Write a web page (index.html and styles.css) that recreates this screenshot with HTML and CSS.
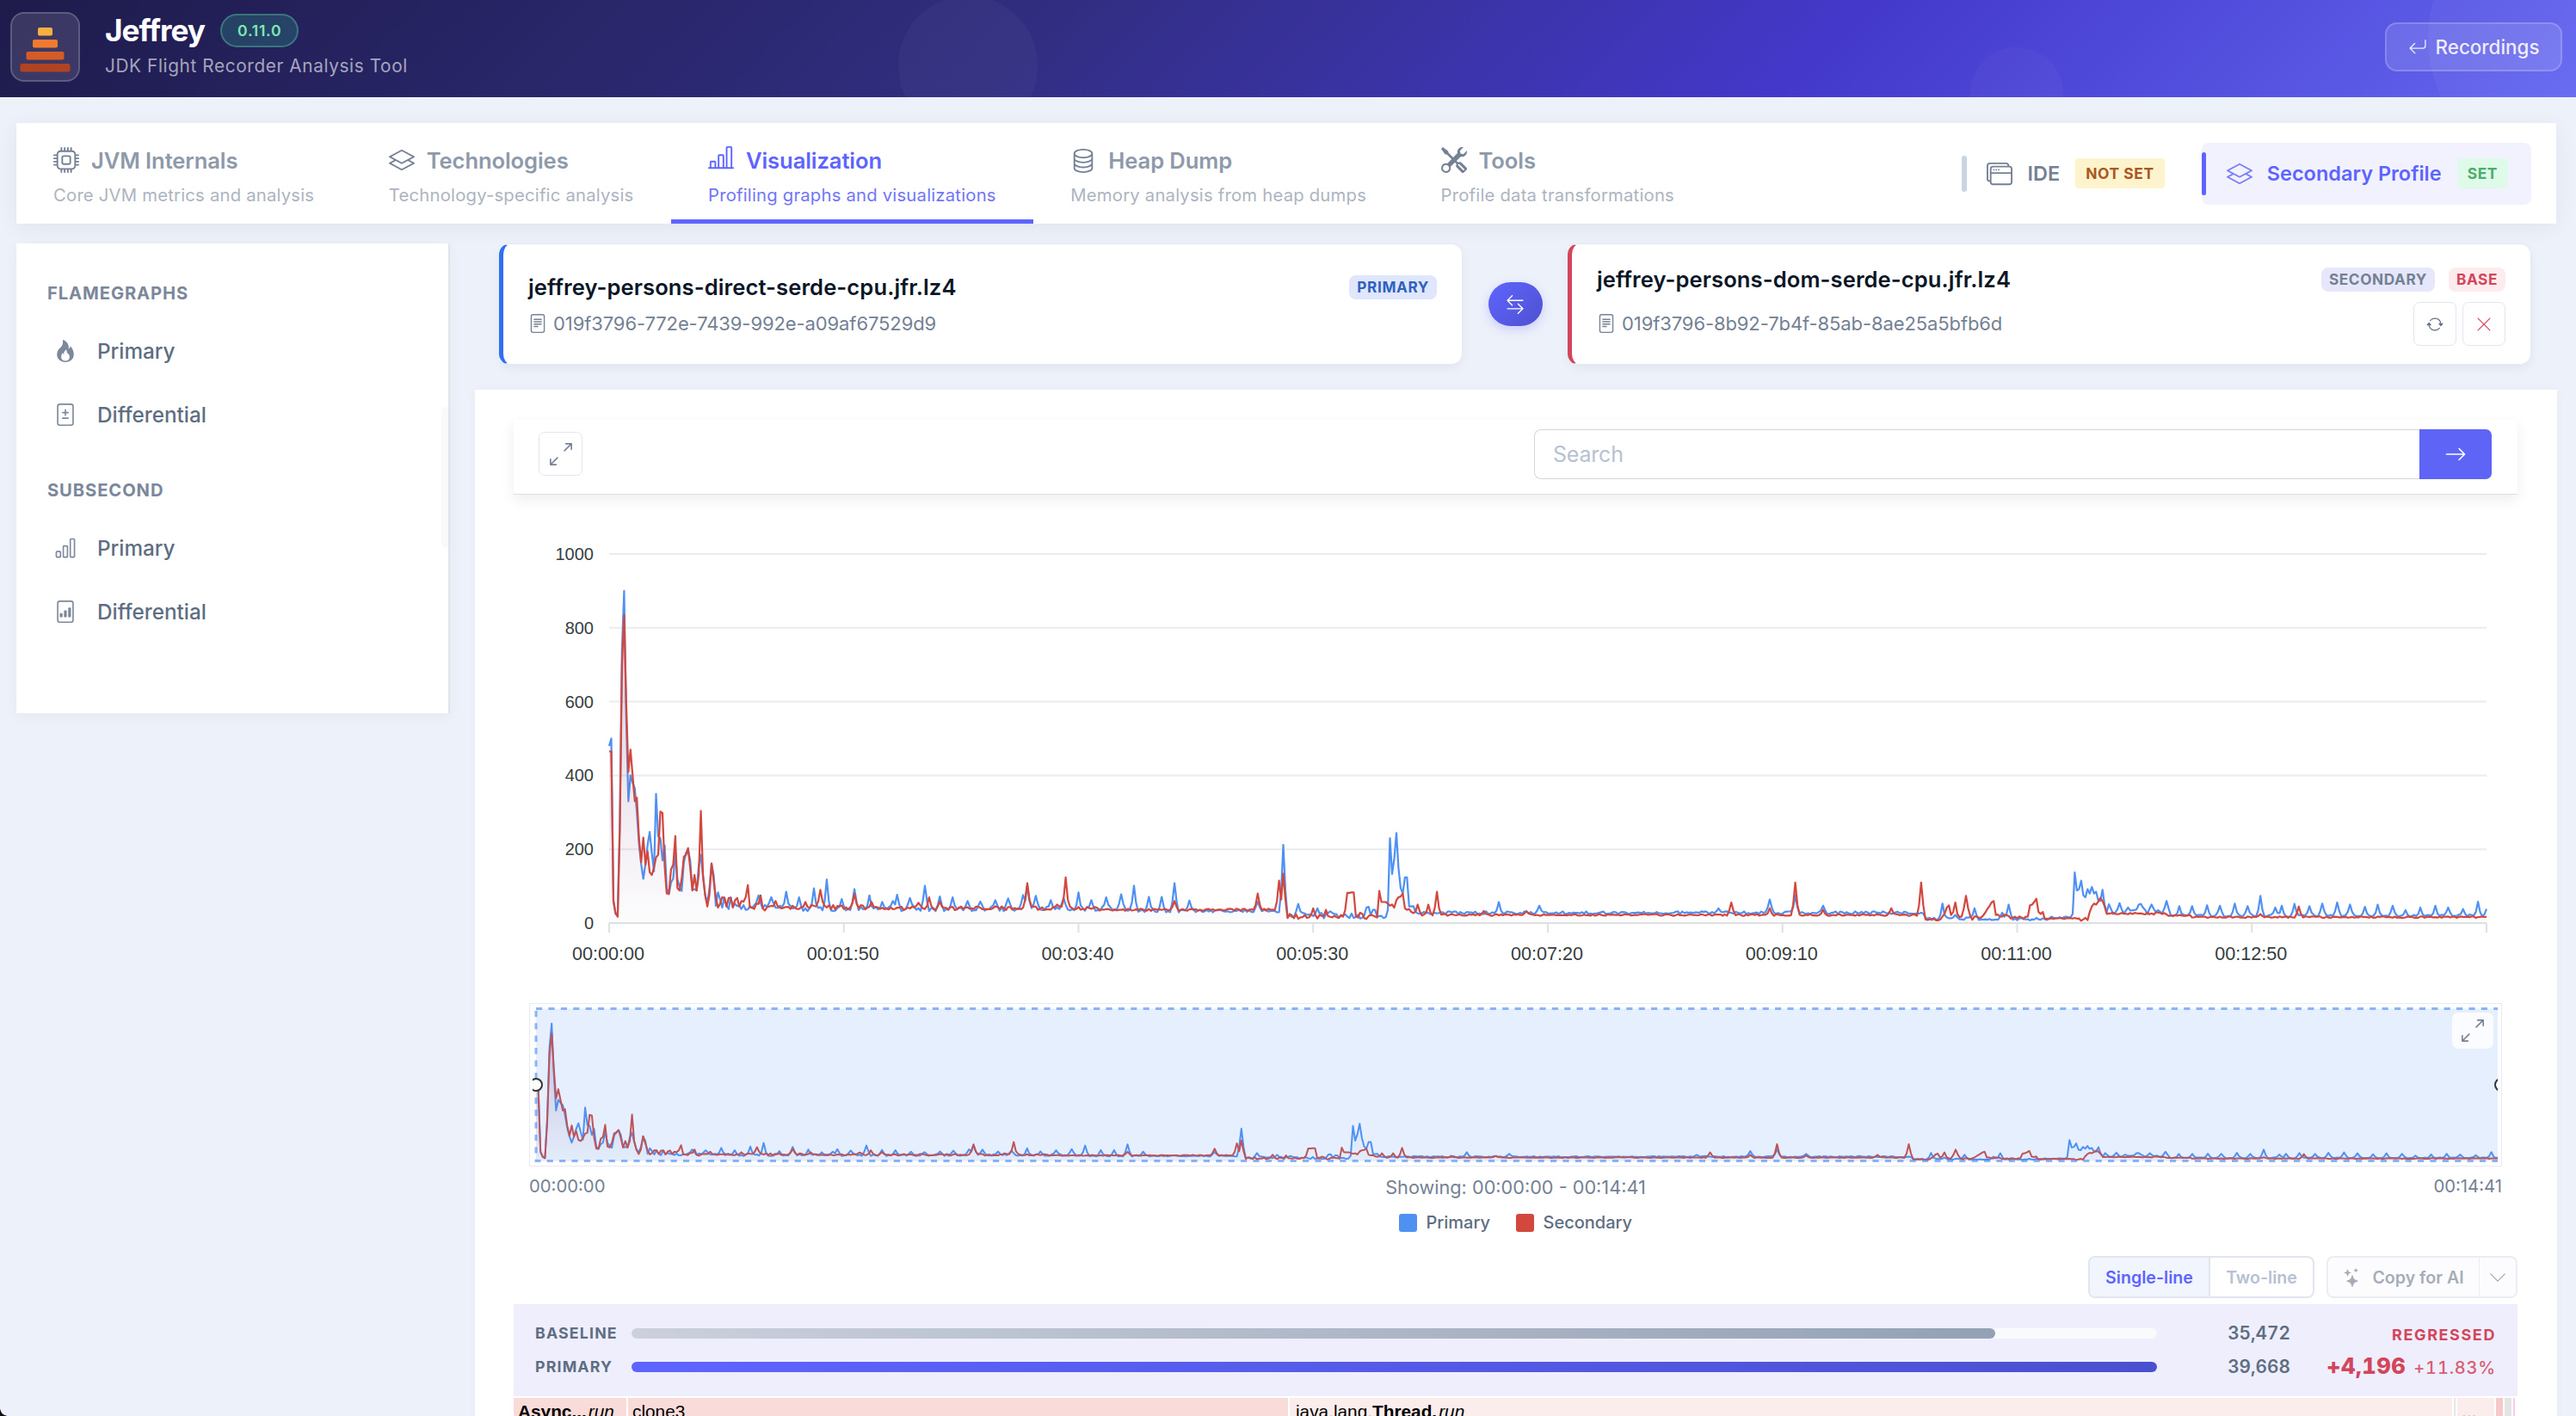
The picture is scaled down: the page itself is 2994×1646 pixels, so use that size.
FILE: index.html
```html
<!DOCTYPE html>
<html lang="en">
<head>
  <meta charset="UTF-8" />
  <title>Jeffrey - JDK Flight Recorder Analysis Tool</title>
  <link rel="stylesheet" href="styles.css">
</head>
<body>

<!-- icon sprite -->
<svg class="sprite" width="0" height="0">
  <symbol id="i-cpu" viewBox="0 0 16 16"><path d="M5 0a.5.5 0 0 1 .5.5V2h1V.5a.5.5 0 0 1 1 0V2h1V.5a.5.5 0 0 1 1 0V2h1V.5a.5.5 0 0 1 1 0V2A2.5 2.5 0 0 1 14 4.5h1.5a.5.5 0 0 1 0 1H14v1h1.5a.5.5 0 0 1 0 1H14v1h1.5a.5.5 0 0 1 0 1H14v1h1.5a.5.5 0 0 1 0 1H14a2.5 2.5 0 0 1-2.5 2.5v1.5a.5.5 0 0 1-1 0V14h-1v1.5a.5.5 0 0 1-1 0V14h-1v1.5a.5.5 0 0 1-1 0V14h-1v1.5a.5.5 0 0 1-1 0V14A2.5 2.5 0 0 1 2 11.5H.5a.5.5 0 0 1 0-1H2v-1H.5a.5.5 0 0 1 0-1H2v-1H.5a.5.5 0 0 1 0-1H2v-1H.5a.5.5 0 0 1 0-1H2A2.5 2.5 0 0 1 4.5 2V.5A.5.5 0 0 1 5 0m-.5 3A1.5 1.5 0 0 0 3 4.5v7A1.5 1.5 0 0 0 4.5 13h7a1.5 1.5 0 0 0 1.5-1.5v-7A1.5 1.5 0 0 0 11.5 3zM5 6.5A1.5 1.5 0 0 1 6.5 5h3A1.5 1.5 0 0 1 11 6.5v3A1.5 1.5 0 0 1 9.5 11h-3A1.5 1.5 0 0 1 5 9.5zM6.5 6a.5.5 0 0 0-.5.5v3a.5.5 0 0 0 .5.5h3a.5.5 0 0 0 .5-.5v-3a.5.5 0 0 0-.5-.5z"/></symbol>
  <symbol id="i-layers" viewBox="0 0 16 16"><path d="M8.235 1.559a.5.5 0 0 0-.47 0l-7.5 4a.5.5 0 0 0 0 .882L3.188 8 .264 9.559a.5.5 0 0 0 0 .882l7.5 4a.5.5 0 0 0 .47 0l7.5-4a.5.5 0 0 0 0-.882L12.813 8l2.922-1.559a.5.5 0 0 0 0-.882zm3.515 7.008L14.438 10 8 13.433 1.562 10 4.25 8.567l3.515 1.874a.5.5 0 0 0 .47 0zM8 9.433 1.562 6 8 2.567 14.438 6z"/></symbol>
  <symbol id="i-bars-line" viewBox="0 0 16 16"><path d="M11 2a1 1 0 0 1 1-1h2a1 1 0 0 1 1 1v12h.5a.5.5 0 0 1 0 1H.5a.5.5 0 0 1 0-1H1v-3a1 1 0 0 1 1-1h2a1 1 0 0 1 1 1v3h1V7a1 1 0 0 1 1-1h2a1 1 0 0 1 1 1v7h1zm1 12h2V2h-2zm-3 0V7H7v7zm-5 0v-3H2v3z"/></symbol>
  <symbol id="i-database" viewBox="0 0 16 16"><path d="M4.318 2.687C5.234 2.271 6.536 2 8 2s2.766.27 3.682.687C12.644 3.125 13 3.627 13 4c0 .374-.356.875-1.318 1.313C10.766 5.729 9.464 6 8 6s-2.766-.27-3.682-.687C3.356 4.875 3 4.373 3 4c0-.374.356-.875 1.318-1.313M13 5.698V7c0 .374-.356.875-1.318 1.313C10.766 8.729 9.464 9 8 9s-2.766-.27-3.682-.687C3.356 7.875 3 7.373 3 7V5.698c.271.202.58.378.904.525C4.978 6.711 6.427 7 8 7s3.022-.289 4.096-.777A5 5 0 0 0 13 5.698M14 4c0-1.007-.875-1.755-1.904-2.223C11.022 1.289 9.573 1 8 1s-3.022.289-4.096.777C2.875 2.245 2 2.993 2 4v9c0 1.007.875 1.755 1.904 2.223C4.978 15.71 6.427 16 8 16s3.022-.289 4.096-.777C13.125 14.755 14 14.007 14 13zm-1 4.698V10c0 .374-.356.875-1.318 1.313C10.766 11.729 9.464 12 8 12s-2.766-.27-3.682-.687C3.356 10.875 3 10.373 3 10V8.698c.271.202.58.378.904.525C4.978 9.71 6.427 10 8 10s3.022-.289 4.096-.777A5 5 0 0 0 13 8.698m0 3V13c0 .374-.356.875-1.318 1.313C10.766 14.729 9.464 15 8 15s-2.766-.27-3.682-.687C3.356 13.875 3 13.373 3 13v-1.302c.271.202.58.378.904.525C4.978 12.71 6.427 13 8 13s3.022-.289 4.096-.777c.324-.147.633-.323.904-.525"/></symbol>
  <symbol id="i-tools" viewBox="0 0 16 16"><path d="M1 0 0 1l2.2 3.081a1 1 0 0 0 .815.419h.07a1 1 0 0 1 .708.293l2.675 2.675-2.617 2.654A3.003 3.003 0 0 0 0 13a3 3 0 1 0 5.878-.851l2.654-2.617.968.968-.305.914a1 1 0 0 0 .242 1.023l3.27 3.27a.997.997 0 0 0 1.414 0l1.586-1.586a.997.997 0 0 0 0-1.414l-3.27-3.27a1 1 0 0 0-1.023-.242L10.5 9.5l-.96-.96 2.68-2.643A3.005 3.005 0 0 0 16 3q0-.405-.102-.777l-2.14 2.141L12 4l-.364-1.757L13.777.102a3 3 0 0 0-3.675 3.68L7.462 6.46 4.793 3.793a1 1 0 0 1-.293-.707v-.071a1 1 0 0 0-.419-.814zm9.646 10.646a.5.5 0 0 1 .708 0l2.914 2.915a.5.5 0 0 1-.707.707l-2.915-2.914a.5.5 0 0 1 0-.708M3 11l.471.242.529.026.287.445.445.287.026.529L5 13l-.242.471-.026.529-.445.287-.287.445-.529.026L3 15l-.471-.242L2 14.732l-.287-.445L1.268 14l-.026-.529L1 13l.242-.471.026-.529.445-.287.287-.445.529-.026z"/></symbol>
  <symbol id="i-windows" viewBox="0 0 16 16"><path d="M4.5 6a.5.5 0 1 0 0-1 .5.5 0 0 0 0 1M6 6a.5.5 0 1 0 0-1 .5.5 0 0 0 0 1m2-.5a.5.5 0 1 1-1 0 .5.5 0 0 1 1 0"/><path d="M12 1a2 2 0 0 1 2 2 2 2 0 0 1 2 2v8a2 2 0 0 1-2 2H4a2 2 0 0 1-2-2 2 2 0 0 1-2-2V3a2 2 0 0 1 2-2zM2 12V5a2 2 0 0 1 2-2h9a1 1 0 0 0-1-1H2a1 1 0 0 0-1 1v8a1 1 0 0 0 1 1m1-4v5a1 1 0 0 0 1 1h10a1 1 0 0 0 1-1V8zm12-1V5a1 1 0 0 0-1-1H4a1 1 0 0 0-1 1v2z"/></symbol>
  <symbol id="i-return" viewBox="0 0 16 16"><path d="M14.5 1.5a.5.5 0 0 1 .5.5v4.8a2.5 2.5 0 0 1-2.5 2.5H2.707l3.347 3.346a.5.5 0 0 1-.708.708l-4.2-4.2a.5.5 0 0 1 0-.708l4-4a.5.5 0 1 1 .708.708L2.707 8.3H12.5A1.5 1.5 0 0 0 14 6.8V2a.5.5 0 0 1 .5-.5"/></symbol>
  <symbol id="i-fire" viewBox="0 0 16 16"><path d="M8 16c3.314 0 6-2 6-5.5 0-1.5-.5-4-2.5-6 .25 1.5-1.25 2-1.25 2C11 4 9 .5 6 0c.357 2 .5 4-2 6-1.25 1-2 2.729-2 4.5C2 14 4.686 16 8 16m0-1c-1.657 0-3-1-3-2.75 0-.75.25-2 1.25-3C6.125 10 7 10.5 7 10.5c-.375-1.25.5-3.25 2-3.5-.179 1-.25 2 1 3 .625.5 1 1.364 1 2.25C11 14 9.657 15 8 15"/></symbol>
  <symbol id="i-diff" viewBox="0 0 16 16"><path d="M8 4a.5.5 0 0 1 .5.5V6H10a.5.5 0 0 1 0 1H8.5v1.5a.5.5 0 0 1-1 0V7H6a.5.5 0 0 1 0-1h1.5V4.5A.5.5 0 0 1 8 4m-2.5 6.5A.5.5 0 0 1 6 10h4a.5.5 0 0 1 0 1H6a.5.5 0 0 1-.5-.5"/><path d="M2 2a2 2 0 0 1 2-2h8a2 2 0 0 1 2 2v12a2 2 0 0 1-2 2H4a2 2 0 0 1-2-2zm10-1H4a1 1 0 0 0-1 1v12a1 1 0 0 0 1 1h8a1 1 0 0 0 1-1V2a1 1 0 0 0-1-1"/></symbol>
  <symbol id="i-bars" viewBox="0 0 16 16"><path d="M4 11H2v3h2zm5-4H7v7h2zm5-5v12h-2V2zm-2-1a1 1 0 0 0-1 1v12a1 1 0 0 0 1 1h2a1 1 0 0 0 1-1V2a1 1 0 0 0-1-1zM6 7a1 1 0 0 1 1-1h2a1 1 0 0 1 1 1v7a1 1 0 0 1-1 1H7a1 1 0 0 1-1-1zm-5 4a1 1 0 0 1 1-1h2a1 1 0 0 1 1 1v3a1 1 0 0 1-1 1H2a1 1 0 0 1-1-1z"/></symbol>
  <symbol id="i-file-bars" viewBox="0 0 16 16"><path d="M4.5 12a.5.5 0 0 1-.5-.5v-2a.5.5 0 0 1 .5-.5h1a.5.5 0 0 1 .5.5v2a.5.5 0 0 1-.5.5zm3 0a.5.5 0 0 1-.5-.5v-4a.5.5 0 0 1 .5-.5h1a.5.5 0 0 1 .5.5v4a.5.5 0 0 1-.5.5zm3 0a.5.5 0 0 1-.5-.5v-6a.5.5 0 0 1 .5-.5h1a.5.5 0 0 1 .5.5v6a.5.5 0 0 1-.5.5z"/><path d="M2 2a2 2 0 0 1 2-2h8a2 2 0 0 1 2 2v12a2 2 0 0 1-2 2H4a2 2 0 0 1-2-2zm10-1H4a1 1 0 0 0-1 1v12a1 1 0 0 0 1 1h8a1 1 0 0 0 1-1V2a1 1 0 0 0-1-1"/></symbol>
  <symbol id="i-file-text" viewBox="0 0 16 16"><path d="M5 4a.5.5 0 0 0 0 1h6a.5.5 0 0 0 0-1zm-.5 2.5A.5.5 0 0 1 5 6h6a.5.5 0 0 1 0 1H5a.5.5 0 0 1-.5-.5M5 8a.5.5 0 0 0 0 1h6a.5.5 0 0 0 0-1zm0 2a.5.5 0 0 0 0 1h3a.5.5 0 0 0 0-1z"/><path d="M2 2a2 2 0 0 1 2-2h8a2 2 0 0 1 2 2v12a2 2 0 0 1-2 2H4a2 2 0 0 1-2-2zm10-1H4a1 1 0 0 0-1 1v12a1 1 0 0 0 1 1h8a1 1 0 0 0 1-1V2a1 1 0 0 0-1-1"/></symbol>
  <symbol id="i-swap" viewBox="0 0 16 16"><path d="M1 11.5a.5.5 0 0 0 .5.5h11.793l-3.147 3.146a.5.5 0 0 0 .708.708l4-4a.5.5 0 0 0 0-.708l-4-4a.5.5 0 0 0-.708.708L13.293 11H1.5a.5.5 0 0 0-.5.5m14-7a.5.5 0 0 1-.5.5H2.707l3.147 3.146a.5.5 0 1 1-.708.708l-4-4a.5.5 0 0 1 0-.708l4-4a.5.5 0 1 1 .708.708L2.707 4H14.5a.5.5 0 0 1 .5.5"/></symbol>
  <symbol id="i-repeat" viewBox="0 0 16 16"><path d="M11.534 7h3.932a.25.25 0 0 1 .192.41l-1.966 2.36a.25.25 0 0 1-.384 0l-1.966-2.36a.25.25 0 0 1 .192-.41m-11 2h3.932a.25.25 0 0 0 .192-.41L2.692 6.23a.25.25 0 0 0-.384 0L.342 8.59A.25.25 0 0 0 .534 9"/><path d="M8 3c-1.552 0-2.94.707-3.857 1.818a.5.5 0 1 1-.771-.636A6.002 6.002 0 0 1 13.917 7H12.9A5 5 0 0 0 8 3M3.1 9a5.002 5.002 0 0 0 8.757 2.182.5.5 0 1 1 .771.636A6.002 6.002 0 0 1 2.083 9z"/></symbol>
  <symbol id="i-x" viewBox="0 0 16 16"><path d="M2.5 2.5l11 11M13.5 2.5l-11 11" fill="none" stroke="currentColor" stroke-linecap="round"/></symbol>
  <symbol id="i-right" viewBox="0 0 16 16"><path d="M1 8a.5.5 0 0 1 .5-.5h11.793l-3.147-3.146a.5.5 0 0 1 .708-.708l4 4a.5.5 0 0 1 0 .708l-4 4a.5.5 0 0 1-.708-.708L13.293 8.5H1.5A.5.5 0 0 1 1 8"/></symbol>
  <symbol id="i-expand" viewBox="0 0 16 16"><path d="M5.828 10.172a.5.5 0 0 0-.707 0l-4.096 4.096V11.5a.5.5 0 0 0-1 0v3.975a.5.5 0 0 0 .5.5H4.5a.5.5 0 0 0 0-1H1.732l4.096-4.096a.5.5 0 0 0 0-.707m4.344-4.344a.5.5 0 0 0 .707 0l4.096-4.096V4.5a.5.5 0 1 0 1 0V.525a.5.5 0 0 0-.5-.5H11.5a.5.5 0 0 0 0 1h2.768l-4.096 4.096a.5.5 0 0 0 0 .707"/></symbol>
  <symbol id="i-stars" viewBox="0 0 16 16"><path d="M7.657 6.247c.11-.33.576-.33.686 0l.645 1.937a2.89 2.89 0 0 0 1.829 1.828l1.936.645c.33.11.33.576 0 .686l-1.937.645a2.89 2.89 0 0 0-1.828 1.829l-.645 1.936a.361.361 0 0 1-.686 0l-.645-1.937a2.89 2.89 0 0 0-1.828-1.828l-1.937-.645a.361.361 0 0 1 0-.686l1.937-.645a2.89 2.89 0 0 0 1.828-1.828zM3.794 1.148a.217.217 0 0 1 .412 0l.387 1.162c.173.518.579.924 1.097 1.097l1.162.387a.217.217 0 0 1 0 .412l-1.162.387A1.73 1.73 0 0 0 4.593 5.69l-.387 1.162a.217.217 0 0 1-.412 0L3.407 5.69A1.73 1.73 0 0 0 2.31 4.593l-1.162-.387a.217.217 0 0 1 0-.412l1.162-.387A1.73 1.73 0 0 0 3.407 2.31zM10.863.099a.145.145 0 0 1 .274 0l.258.774c.115.346.386.617.732.732l.774.258a.145.145 0 0 1 0 .274l-.774.258a1.16 1.16 0 0 0-.732.732l-.258.774a.145.145 0 0 1-.274 0l-.258-.774a1.16 1.16 0 0 0-.732-.732L9.1 2.137a.145.145 0 0 1 0-.274l.774-.258c.346-.115.617-.386.732-.732z"/></symbol>
  <symbol id="i-down" viewBox="0 0 16 16"><path d="M2 5l6 6 6-6" fill="none" stroke="currentColor" stroke-linecap="round" stroke-linejoin="round"/></symbol>
</svg>

<header class="header">
  <span class="orb orb-1"></span>
  <span class="orb orb-2"></span>
  <span class="orb orb-3"></span>
  <div class="logo">
    <svg width="60" height="52" viewBox="0 0 60 52">
      <rect x="21" y="0" width="17" height="9.5" rx="2" fill="#f5b03d"/>
      <rect x="15" y="14" width="29" height="9.5" rx="2" fill="#f07a30"/>
      <rect x="7.5" y="28" width="44" height="9.5" rx="2" fill="#d65c26"/>
      <rect x="0.5" y="42" width="58" height="9.5" rx="2" fill="#b04422"/>
    </svg>
  </div>
  <div class="brand">
    <div class="brand-row"><span class="brand-name">Jeffrey</span><span class="version">0.11.0</span></div>
    <div class="brand-sub">JDK Flight Recorder Analysis Tool</div>
  </div>
  <button class="recordings"><svg width="22" height="22"><use href="#i-return"/></svg>Recordings</button>
</header>

<nav class="tabs">
  <div class="tab">
    <div class="tab-title"><svg width="30" height="30"><use href="#i-cpu"/></svg>JVM Internals</div>
    <div class="tab-sub">Core JVM metrics and analysis</div>
  </div>
  <div class="tab">
    <div class="tab-title"><svg width="30" height="30"><use href="#i-layers"/></svg>Technologies</div>
    <div class="tab-sub">Technology-specific analysis</div>
  </div>
  <div class="tab active">
    <div class="tab-title"><svg class="raised" width="30" height="30"><use href="#i-bars-line"/></svg>Visualization</div>
    <div class="tab-sub">Profiling graphs and visualizations</div>
  </div>
  <div class="tab">
    <div class="tab-title"><svg width="30" height="30"><use href="#i-database"/></svg>Heap Dump</div>
    <div class="tab-sub">Memory analysis from heap dumps</div>
  </div>
  <div class="tab">
    <div class="tab-title"><svg width="30" height="30"><use href="#i-tools"/></svg>Tools</div>
    <div class="tab-sub">Profile data transformations</div>
  </div>
  <div class="tab-actions">
    <div class="action ide"><svg width="30" height="30"><use href="#i-windows"/></svg>IDE<span class="state not-set">NOT SET</span></div>
    <div class="action secondary"><svg width="30" height="30"><use href="#i-layers"/></svg>Secondary Profile<span class="state set">SET</span></div>
  </div>
</nav>

<div class="page">
  <aside class="sidebar">
    <h4>FLAMEGRAPHS</h4>
    <a><svg width="26" height="26"><use href="#i-fire"/></svg>Primary</a>
    <a><svg width="26" height="26"><use href="#i-diff"/></svg>Differential</a>
    <h4 class="second">SUBSECOND</h4>
    <a><svg width="26" height="26"><use href="#i-bars"/></svg>Primary</a>
    <a><svg width="26" height="26"><use href="#i-file-bars"/></svg>Differential</a>
    <span class="scroll-thumb"></span>
  </aside>

  <main class="content">
    <div class="compare">
      <div class="profile primary">
        <div class="profile-info">
          <div class="profile-name">jeffrey-persons-direct-serde-cpu.jfr.lz4</div>
          <div class="profile-id"><svg width="22" height="22"><use href="#i-file-text"/></svg>019f3796-772e-7439-992e-a09af67529d9</div>
        </div>
        <div class="profile-side"><span class="tag tag-primary">PRIMARY</span></div>
      </div>
      <button class="swap"><svg width="22" height="22"><use href="#i-swap"/></svg></button>
      <div class="profile base">
        <div class="profile-info">
          <div class="profile-name">jeffrey-persons-dom-serde-cpu.jfr.lz4</div>
          <div class="profile-id"><svg width="22" height="22"><use href="#i-file-text"/></svg>019f3796-8b92-7b4f-85ab-8ae25a5bfb6d</div>
        </div>
        <div class="profile-side">
          <div class="tags"><span class="tag tag-secondary">SECONDARY</span><span class="tag tag-base">BASE</span></div>
          <div class="profile-buttons">
            <button><svg width="20" height="20"><use href="#i-repeat"/></svg></button>
            <button class="remove"><svg width="20" height="20"><use href="#i-x"/></svg></button>
          </div>
        </div>
      </div>
    </div>

    <section class="panel">
      <div class="toolbar">
        <button class="expand"><svg width="26" height="26"><use href="#i-expand"/></svg></button>
        <div class="search"><span class="search-input">Search</span><button><svg width="26" height="26"><use href="#i-right"/></svg></button></div>
      </div>

      <svg class="chart" id="chart" width="2329" height="575" viewBox="597 575 2329 575"></svg>

      <div class="brush">
        <svg id="brush" width="2291" height="188" viewBox="616 1167 2291 188"></svg>
        <button class="brush-expand"><svg width="26" height="26"><use href="#i-expand"/></svg></button>
      </div>
      <div class="range"><span>00:00:00</span><span class="showing">Showing: 00:00:00 - 00:14:41</span><span class="end">00:14:41</span></div>
      <div class="legend">
        <span><i class="dot blue"></i>Primary</span>
        <span><i class="dot red"></i>Secondary</span>
      </div>

      <div class="options">
        <div class="segmented"><span class="on">Single-line</span><span>Two-line</span></div>
        <div class="copy"><span><svg width="22" height="22"><use href="#i-stars"/></svg>Copy for AI</span><span class="caret"><svg width="22" height="22"><use href="#i-down"/></svg></span></div>
      </div>

      <div class="summary">
        <div class="bars">
          <span class="bar-label">BASELINE</span>
          <div class="track"><div class="fill fill-baseline" style="width: 89.4%"></div></div>
          <span class="bar-value">35,472</span>
          <span class="bar-label">PRIMARY</span>
          <div class="track"><div class="fill fill-primary" style="width: 100%"></div></div>
          <span class="bar-value">39,668</span>
        </div>
        <div class="verdict">
          <div class="verdict-title">REGRESSED</div>
          <div class="verdict-delta"><span>+4,196</span><small>+11.83%</small></div>
        </div>
      </div>

      <div class="flame">
        <div class="frame f1"><b>Async...</b><i>run</i></div>
        <div class="frame f2">clone3</div>
        <div class="frame f3">java.lang.<b>Thread.</b><i>run</i></div>
        <div class="frame f4"></div>
        <div class="frame f5">...</div>
        <div class="frame f6"></div>
        <div class="frame f7"></div>
        <div class="frame f8"></div>
      </div>
    </section>
  </main>
</div>

<script src="chart.js"></script>
</body>
</html>
```
FILE: styles.css
```css
* {
  box-sizing: border-box;
}

body {
  margin: 0;
  height: 1646px;
  overflow: hidden;
  position: relative;
  background: #edf1fa;
  font-family: Inter, "Liberation Sans", sans-serif;
  color: #5e6e82;
}

/* rounded window corner */
body::after {
  content: '';
  position: absolute;
  left: 0;
  bottom: 0;
  width: 9px;
  height: 9px;
  background: radial-gradient(circle at 100% 0, transparent 8.5px, #111 9px);
}

button {
  font: inherit;
  color: inherit;
  padding: 0;
  border: 0;
  display: flex;
  align-items: center;
  justify-content: center;
}

svg {
  fill: currentColor;
  flex: none;
}

.sprite {
  position: absolute;
}

/* header */
.header {
  position: relative;
  overflow: hidden;
  height: 113px;
  padding: 0 16px 4px 12px;
  display: flex;
  align-items: center;
  background: linear-gradient(135deg, #1e1b4b 0%, #312e81 40%, #4338ca 70%, #6366f1 100%);
  color: #fff;
}

.orb {
  position: absolute;
  border-radius: 50%;
  background: rgba(255, 255, 255, 0.03);
}

.orb-1 { left: 1044px; top: -5px; width: 162px; height: 162px; }
.orb-2 { left: 2290px; top: 55px; width: 108px; height: 108px; }
.orb-3 { left: 2822px; top: -115px; width: 320px; height: 320px; background: rgba(255, 255, 255, 0.04); }

.logo {
  width: 81px;
  height: 81px;
  border: 2px solid rgba(255, 255, 255, 0.18);
  border-radius: 16px;
  background: rgba(255, 255, 255, 0.12);
  display: flex;
  align-items: center;
  justify-content: center;
  padding-top: 6px;
}

.brand {
  margin-left: 29px;
}

.brand-row {
  display: flex;
  align-items: center;
  height: 42px;
}

.brand-name {
  font-size: 35.2px;
  font-weight: 700;
  letter-spacing: -1px;
  line-height: 44px;
}

.version {
  margin-left: 18px;
  height: 39px;
  padding: 0 18px;
  border: 2px solid rgba(110, 231, 183, 0.3);
  border-radius: 20px;
  background: rgba(52, 211, 153, 0.2);
  color: #7ee7b5;
  font-size: 17.6px;
  font-weight: 600;
  line-height: 36px;
  letter-spacing: 0.75px;
}

.brand-sub {
  height: 36px;
  margin-top: 3px;
  font-size: 20.8px;
  line-height: 36px;
  letter-spacing: 0.6px;
  color: rgba(255, 255, 255, 0.6);
}

.recordings {
  position: relative;
  margin-left: auto;
  width: 206px;
  height: 57px;
  gap: 10px;
  border: 2px solid rgba(255, 255, 255, 0.18);
  border-radius: 14px;
  background: rgba(255, 255, 255, 0.12);
  color: rgba(255, 255, 255, 0.88);
  font-size: 22.4px;
  font-weight: 500;
}

/* tabs */
.tabs {
  margin: 30px 23px 0 19px;
  height: 117px;
  display: flex;
  background: #fff;
  box-shadow: 0 4px 24px rgba(0, 0, 0, 0.06);
}

.tab {
  padding: 25px 43.5px 0 43px;
  color: #748194;
  white-space: nowrap;
}

.tab-title {
  display: flex;
  align-items: center;
  gap: 14px;
  height: 36px;
  font-size: 25.6px;
  font-weight: 600;
  letter-spacing: -0.1px;
  color: #8e99a9;
}

.tab-title svg {
  color: #748194;
}

.tab-title .raised {
  margin-bottom: 6px;
}

.tab-sub {
  margin-top: 10px;
  font-size: 20.3px;
  line-height: 25px;
  letter-spacing: 0.2px;
  color: #adb4bf;
}

.tab.active {
  border-bottom: 5px solid #5e64ff;
}

.tab.active .tab-title,
.tab.active .tab-title svg {
  color: #5e64ff;
}

.tab.active .tab-sub {
  color: #7176f8;
}

.tab-actions {
  margin-left: auto;
  padding-right: 29px;
  display: flex;
  align-items: center;
  gap: 19px;
}

.action {
  position: relative;
  height: 72px;
  display: flex;
  align-items: center;
  font-size: 23.5px;
  font-weight: 600;
  padding: 0 24px 0 29px;
  color: #748194;
}

.action::before {
  content: '';
  position: absolute;
  left: 0;
  top: 15px;
  width: 6px;
  height: 42px;
  border-radius: 3px;
  background: #cbd5e1;
}

.action svg {
  margin-right: 17px;
}

.action.secondary {
  padding: 0 27px 0 29px;
  border-radius: 8px;
  background: #f2f2fe;
  color: #5e64ff;
}

.action.secondary::before {
  top: 11px;
  width: 5px;
  height: 50px;
  background: #5e64ff;
}

.action.secondary svg {
  color: #7a80f5;
}

.state {
  margin-left: 18px;
  height: 35px;
  padding: 0 12px;
  border-radius: 4px;
  font-size: 17.4px;
  font-weight: 700;
  line-height: 35px;
  letter-spacing: 0.6px;
}

.not-set { background: #fdf3cd; color: #a85820; }
.set { background: #e0faea; color: #4bae6b; }

/* layout */
.page {
  display: flex;
  align-items: flex-start;
  gap: 29px;
  margin: 23px 23px 0 19px;
}

.sidebar {
  position: relative;
  width: 504px;
  height: 546px;
  flex: none;
  padding: 42px 36px;
  background: #fff;
  border-right: 2px solid #e1e5ea;
  box-shadow: 0 4px 16px rgba(0, 0, 0, 0.04);
}

.sidebar h4 {
  margin: 0 0 15px;
  font-size: 20.2px;
  line-height: 32px;
  font-weight: 700;
  letter-spacing: 0.9px;
  color: #7b879a;
}

.sidebar h4.second {
  margin-top: 35px;
}

.sidebar a {
  display: flex;
  align-items: center;
  gap: 24px;
  height: 74px;
  padding-left: 8px;
  font-size: 24.3px;
  font-weight: 500;
}

.sidebar h4 + a {
  margin-top: -1px;
}

.sidebar a svg {
  color: #7c889b;
}

.scroll-thumb {
  position: absolute;
  right: 0;
  top: 190px;
  width: 8px;
  height: 164px;
  border-radius: 6px 0 0 6px;
  background: #f9f9fa;
}

.content {
  flex: 1;
}

/* compared profiles */
.compare {
  display: flex;
  align-items: center;
  height: 141px;
  padding: 0 30px 0 28px;
}

.profile {
  flex: 1;
  height: 141px;
  display: flex;
  justify-content: space-between;
  padding: 0 29px 0 29px;
  border: 1px solid #e6eaf0;
  border-left: 5px solid #2f6ff0;
  border-radius: 13px;
  background: #fff;
  box-shadow: 0 4px 12px rgba(0, 0, 0, 0.05);
}

.profile.base {
  border-left-color: #d3455b;
}

.profile-info {
  padding-top: 33px;
}

.profile-name {
  font-size: 25.6px;
  line-height: 34px;
  font-weight: 600;
  letter-spacing: 0.08px;
  color: #0b1727;
}

.profile-id {
  margin-top: 8px;
  display: flex;
  align-items: center;
  gap: 7px;
  font-size: 22px;
  line-height: 34px;
  letter-spacing: -0.1px;
  color: #748194;
}

.base .profile-info { padding-top: 24px; }
.base .profile-id { margin-top: 17px; }

.profile-side {
  padding-top: 36px;
}

.base .profile-side {
  padding-top: 27px;
}

.tags {
  display: flex;
  gap: 16px;
}

.tag {
  display: block;
  height: 28px;
  padding: 0 9px;
  border-radius: 8px;
  font-size: 17.2px;
  font-weight: 700;
  line-height: 28px;
  letter-spacing: 0.6px;
}

.tag-primary { background: #e0e6fb; color: #2f62c0; }
.tag-secondary { background: #e6e7fb; color: #748194; }
.tag-base { background: #fdeced; color: #d3455b; }

.profile-buttons {
  display: flex;
  justify-content: flex-end;
  gap: 7px;
  margin-top: 12px;
}

.profile-buttons button {
  width: 50px;
  height: 51px;
  border: 1px solid #e3e6ed;
  border-radius: 7px;
  background: #fff;
}

.profile-buttons .remove {
  color: #d3455b;
}

.swap {
  width: 63px;
  height: 51px;
  margin: 0 29.5px;
  border-radius: 26px;
  background: linear-gradient(135deg, #5e64ff, #4f51cf);
  box-shadow: 0 4px 12px rgba(94, 100, 255, 0.25);
  color: #fff;
}

/* main panel */
.panel {
  height: 1240px;
  margin-top: 29px;
  padding: 35px 46px 0 45px;
  background: #fff;
  box-shadow: 0 0 12px rgba(0, 0, 0, 0.03);
}

.toolbar {
  display: flex;
  align-items: center;
  justify-content: space-between;
  height: 87px;
  padding: 0 30px 7px 29px;
  border-bottom: 1px solid #dcdfe3;
  box-shadow: 0 6px 16px rgba(0, 0, 0, 0.07);
}

.expand {
  width: 51px;
  height: 51px;
  border: 1px solid #e3e6ed;
  border-radius: 7px;
  background: #fff;
  color: #748194;
}

.search {
  display: flex;
  width: 1113px;
  height: 58px;
}

.search-input {
  flex: 1;
  padding-left: 21px;
  border: 1px solid #d3d7dd;
  border-right: 0;
  border-radius: 8px 0 0 8px;
  font-size: 25px;
  line-height: 56px;
  letter-spacing: -0.2px;
  color: #b6c1d2;
}

.search button {
  width: 84px;
  border-radius: 0 7px 7px 0;
  background: #5e64f5;
  color: #fff;
}

.chart {
  display: block;
}

.y-label {
  font: 20px "Liberation Sans", sans-serif;
  fill: #373d3f;
  text-anchor: end;
}

.x-label {
  font: 21.6px "Liberation Sans", sans-serif;
  fill: #373d3f;
  text-anchor: middle;
}

.brush {
  position: relative;
  width: 2293px;
  height: 190px;
  margin: 16px 0 0 18px;
  border: 1px solid #e7eaee;
}

.brush > svg {
  display: block;
}

.brush-expand {
  position: absolute;
  right: 9px;
  top: 10px;
  width: 48px;
  height: 42px;
  border-radius: 7px;
  background: rgba(255, 255, 255, 0.8);
  color: #748194;
}

.range {
  display: grid;
  grid-template-columns: 1fr auto 1fr;
  width: 2293px;
  height: 48px;
  margin-left: 18px;
  font-size: 20.3px;
  line-height: 46px;
  color: #748194;
}

.range .end {
  text-align: right;
}

.showing {
  font-size: 21.7px;
  padding-top: 1px;
}

.legend {
  display: flex;
  justify-content: center;
  gap: 30px;
  height: 34px;
  font-size: 20px;
  font-weight: 500;
}

.legend span {
  display: flex;
  align-items: center;
}

.dot {
  width: 21px;
  height: 21px;
  margin-right: 10.5px;
  border-radius: 3px;
}

.blue { background: #4e91f3; }
.red { background: #d2483f; }

.options {
  display: flex;
  justify-content: flex-end;
  gap: 14px;
  margin-top: 22px;
  height: 49px;
  font-size: 19.6px;
  font-weight: 600;
}

.segmented,
.copy {
  display: flex;
  border: 2px solid #e1e6ee;
  border-radius: 8px;
  overflow: hidden;
}

.segmented span,
.copy span {
  display: flex;
  align-items: center;
  justify-content: center;
}

.segmented span {
  width: 119px;
  color: #b6c1d2;
}

.segmented .on {
  width: 140px;
  border-right: 2px solid #e1e6ee;
  background: #f1f5fe;
  color: #5e64ff;
}

.copy {
  border-color: #ebedf2;
  background: #fcfcfe;
  color: #a6adb8;
}

.copy span {
  width: 175px;
  gap: 12px;
}

.copy .caret {
  width: 43px;
  border-left: 1px solid #ebedf2;
}

/* diff summary */
.summary {
  display: flex;
  align-items: center;
  height: 107px;
  margin-top: 7px;
  padding: 0 25px;
  background: #efeefd;
}

.bars {
  display: grid;
  grid-template-columns: 112px 1773px 155px;
  row-gap: 13px;
  align-items: center;
}

.bar-label {
  font-size: 17.8px;
  font-weight: 700;
  line-height: 26px;
  letter-spacing: 1.15px;
}

.bar-value {
  font-size: 20.8px;
  font-weight: 600;
  line-height: 26px;
  text-align: right;
  font-variant-numeric: tabular-nums;
}

.track {
  height: 12px;
  border-radius: 6px;
  background: #f9fafc;
}

.fill {
  height: 12px;
  border-radius: 6px;
}

.fill-baseline { background: linear-gradient(90deg, #cbd0dc, #94a1b5); }
.fill-primary { background: linear-gradient(90deg, #5e64ff, #4b50d0); }

.verdict {
  margin-left: auto;
  padding-top: 6px;
  text-align: right;
  color: #d3455b;
  white-space: nowrap;
}

.verdict-title {
  font-size: 18px;
  font-weight: 700;
  line-height: 32px;
  letter-spacing: 1.6px;
}

.verdict-delta {
  display: flex;
  justify-content: flex-end;
  align-items: baseline;
  gap: 9px;
  font-size: 25.6px;
  font-weight: 800;
  line-height: 40px;
  letter-spacing: 0.5px;
  font-variant-numeric: tabular-nums;
}

.verdict-delta small {
  font-size: 20px;
  font-weight: 500;
  opacity: 0.85;
  letter-spacing: 0.8px;
}

/* flamegraph row */
.flame {
  display: flex;
  gap: 2px;
  margin-top: 2px;
  height: 34px;
  font: 20.8px/32px "Liberation Sans", sans-serif;
  color: #000;
}

.frame {
  height: 34px;
  padding-left: 5px;
  white-space: nowrap;
  overflow: hidden;
  background: #f9dcd9;
}

.frame i {
  margin-left: 2px;
}

.f1 { width: 131px; }
.f2 { width: 767px; }
.f3 { width: 1351px; padding-left: 7px; background: #fbedec; }
.f4 { width: 2px; padding: 0; background: #e6e6e6; }
.f5 { width: 43px; background: #fbedec; }
.f6 { width: 8px; padding: 0; background: #f5c9c9; }
.f7 { width: 8px; padding: 0; background: #e4e4e4; }
.f8 { width: 2px; padding: 0; background: #f6cdea; }
```
FILE: chart.js
```js
const BLUE = '#4e91f3';
const RED = '#d2483f';
const LAST = 880;

// floor: [from second, level, jitter], runs: [first second, values...], spikes: [second, value]
const primary = {
  floor: [[0, 42, 7], [90, 38, 6], [245, 33, 4], [317, 20, 8], [362, 17, 4], [378, 28, 4], [617, 12, 4], [640, 11, 3], [660, 11, 4], [675, 15, 3], [701, 30, 6], [731, 20, 3]],
  runs: [
    [0, 480, 500, 60, 25, 20, 280, 740, 900, 560, 330, 400, 380, 365, 300, 215, 160, 120, 160, 210, 247, 190, 140, 350, 235, 230, 170, 210, 95, 78, 110, 120, 190, 120, 98, 87, 165, 190, 200, 170, 90, 92, 88, 155, 185, 125, 75, 55, 92, 160, 130, 47, 83, 65, 42, 70, 47, 38, 70, 44, 52],
    [354, 22, 42, 44, 22, 36, 36, 18],
    [364, 16, 35, 230, 133, 175, 244, 150, 95, 80, 124, 124, 45, 45, 46, 30],
    [685, 15, 25, 137, 88, 92, 115, 75, 70, 92, 80, 98, 80, 85, 62, 60, 90, 48, 30]
  ],
  spikes: [[70, 75], [76, 70], [83, 85], [89, 70], [96, 94], [102, 118], [109, 65], [115, 92], [122, 75], [128, 57], [133, 60], [135, 77], [141, 68], [148, 101], [155, 72], [161, 70], [168, 60], [174, 58], [181, 62], [187, 67], [194, 76], [196, 103], [200, 74], [207, 62], [213, 68], [220, 83], [226, 62], [233, 70], [240, 78], [246, 101], [253, 71], [259, 71], [265, 108], [272, 61], [304, 58], [316, 212], [323, 52], [332, 40], [338, 32], [417, 57], [436, 47], [520, 40], [544, 64], [556, 75], [569, 47], [625, 53], [631, 22], [640, 40], [653, 28], [656, 50], [703, 51], [708, 54], [712, 42], [717, 50], [718, 52], [723, 50], [730, 60], [736, 46], [742, 46], [749, 48], [755, 47], [762, 53], [768, 46], [774, 74], [781, 42], [784, 47], [790, 52], [797, 46], [803, 53], [810, 56], [816, 50], [823, 44], [829, 50], [836, 47], [842, 35], [849, 42], [856, 47], [862, 42], [869, 38], [876, 58], [880, 38]]
};

const secondary = {
  floor: [[0, 43, 6], [120, 40, 5], [230, 36, 3], [317, 18, 7], [378, 22, 2.5], [617, 10, 3], [640, 19, 5], [657, 15, 4], [673, 13, 2], [702, 26, 3], [731, 20, 2], [742, 16, 2]],
  runs: [
    [0, 465, 465, 60, 28, 17, 250, 700, 835, 600, 410, 470, 400, 330, 340, 230, 165, 232, 158, 195, 138, 130, 150, 178, 185, 302, 298, 155, 80, 80, 145, 158, 236, 95, 88, 120, 180, 185, 203, 150, 88, 130, 88, 130, 304, 130, 75, 45, 75, 162, 115, 70, 42, 52, 70, 68, 45, 68, 68, 42, 62, 68, 45, 60, 58, 70, 103, 42, 42, 38, 52, 52, 75, 40, 34],
    [345, 35, 82, 82, 83, 83, 20, 15, 28, 25, 13],
    [360, 15, 87, 57, 57, 57, 53, 47, 50, 42, 62, 70, 72, 80, 40, 36, 38, 30, 27],
    [625, 18, 26, 42, 48, 22, 30, 56, 24, 16, 18, 40, 74, 40, 20],
    [644, 20, 28, 38, 46, 56, 60, 22],
    [666, 48, 50, 57, 66, 30, 25, 30, 10],
    [690, 6, 10, 14, 8, 30, 45, 53, 50, 58, 68, 60, 45, 25]
  ],
  spikes: [[78, 60], [92, 57], [99, 90], [115, 79], [123, 57], [145, 55], [150, 70], [155, 58], [196, 108], [210, 50], [214, 124], [265, 60], [304, 80], [314, 115], [316, 134], [330, 40], [336, 36], [379, 50], [384, 50], [388, 85], [410, 33], [430, 32], [526, 56], [544, 40], [556, 110], [569, 36], [601, 40], [615, 110], [774, 24], [792, 45]]
};

function build(def, seed) {
  const values = [];
  let state = seed;
  let level = 0;
  let jitter = 0;
  for (let t = 0; t <= LAST; t++) {
    const step = def.floor.find(f => f[0] === t);
    if (step) [, level, jitter] = step;
    state = (state * 16807) % 2147483647;
    values.push(level + (state / 2147483647 - 0.5) * 2 * jitter);
  }
  def.spikes.forEach(([t, v]) => {
    const lift = (at, value) => {
      if (at >= 0 && at <= LAST) values[at] = Math.max(values[at], value);
    };
    const base = Math.min(values[t], v);
    values[t] = v;
    lift(t - 1, base + (v - base) * 0.3);
    lift(t + 1, base + (v - base) * 0.3);
  });
  def.runs.forEach(([from, ...list]) => list.forEach((v, i) => { values[from + i] = v; }));
  return values;
}

// line plus a faded area underneath
function series(values, box, color, gradient) {
  const px = (box.right - box.left) / LAST;
  const py = (box.bottom - box.top) / 1000;
  const points = values.map((v, t) => (box.left + t * px).toFixed(1) + ' ' + (box.bottom - v * py).toFixed(1));
  const line = 'M' + points.join('L');
  return `<path d="${line}L${box.right} ${box.bottom}L${box.left} ${box.bottom}Z" fill="url(#${gradient})"/>
    <path d="${line}" fill="none" stroke="${color}" stroke-width="${box.stroke}" stroke-linejoin="round"/>`;
}

function gradients(prefix, box) {
  return `<defs>${[['b', BLUE], ['r', RED]].map(([k, c]) =>
    `<linearGradient id="${prefix}-${k}" gradientUnits="userSpaceOnUse" x1="0" x2="0" y1="${box.top}" y2="${box.bottom}">
      <stop offset="0" stop-color="${c}" stop-opacity=".2"/><stop offset="1" stop-color="${c}" stop-opacity="0.01"/>
    </linearGradient>`).join('')}</defs>`;
}

const blueValues = build(primary, 4711);
const redValues = build(secondary, 90210);

// main chart
const main = { left: 708, right: 2890, top: 644, bottom: 1073, stroke: 2.2 };
let out = gradients('main', main);
for (let v = 0; v <= 1000; v += 200) {
  const y = main.bottom - (main.bottom - main.top) * v / 1000;
  out += `<line x1="${main.left}" x2="${main.right}" y1="${y}" y2="${y}" stroke="${v ? '#eaecef' : '#dfe0e2'}" stroke-width="2"/>`;
  out += `<text class="y-label" x="690" y="${y + 7}">${v}</text>`;
}
const ticks = ['00:00:00', '00:01:50', '00:03:40', '00:05:30', '00:07:20', '00:09:10', '00:11:00', '00:12:50', ''];
ticks.forEach((label, i) => {
  const x = main.left + i * (main.right - main.left) / 8;
  out += `<line x1="${x}" x2="${x}" y1="1073" y2="1084" stroke="#e0e0e0" stroke-width="2"/>`;
  out += `<text class="x-label" x="${x - 1}" y="1116">${label}</text>`;
});
out += series(blueValues, main, BLUE, 'main-b') + series(redValues, main, RED, 'main-r');
document.getElementById('chart').innerHTML = out;

// brush with the whole recording selected
const brush = { left: 623, right: 2906, top: 1172, bottom: 1349.5, stroke: 2 };
document.getElementById('brush').innerHTML = gradients('brush', brush)
  + '<clipPath id="brush-clip"><rect x="619" y="1167" width="2284" height="188"/></clipPath>'
  + '<g clip-path="url(#brush-clip)">'
  + series(blueValues, brush, BLUE, 'brush-b') + series(redValues, brush, RED, 'brush-r')
  + `<rect x="623" y="1172.5" width="2283" height="177" fill="${BLUE}" fill-opacity=".15" stroke="#4285f4" stroke-opacity=".6" stroke-width="3" stroke-dasharray="7.2 7.2"/>`
  + '<circle cx="623" cy="1261" r="7" fill="#fff" stroke="#333" stroke-width="2"/>'
  + '<circle cx="2907" cy="1261" r="7" fill="#fff" stroke="#333" stroke-width="2"/>'
  + '</g>';
```
